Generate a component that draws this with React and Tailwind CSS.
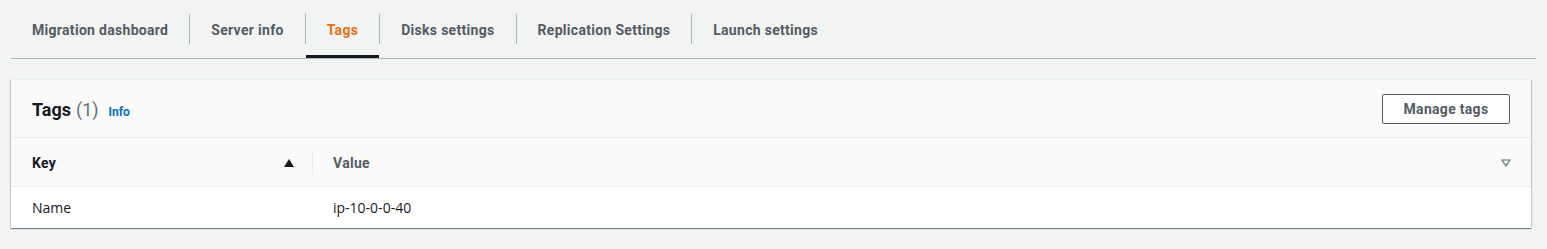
import React from "react";

const tabs = [
    {label: "Migration dashboard"},
    {label: "Server info"},
    {label: "Tags", active: true},
    {label: "Disks settings"},
    {label: "Replication Settings"},
    {label: "Launch settings"},
];

function TabBar() {
    return (
        <div className="flex items-stretch border-b border-[#aab7b8] h-[59px]">
            {tabs.map((t, i) => (
                <div key={t.label} className="flex items-center">
                    {i > 0 && <div className="w-px h-[30px] bg-[#aab7b8]"/>}
                    <div className={"relative h-full flex items-center pt-[2px] px-[21px] text-[14px] font-bold tracking-[0.3px] " + (t.active ? "text-[#ec7211]" : "text-[#545b64]")}>
                        {t.label}
                        {t.active && <div className="absolute left-0 right-0 bottom-0 h-[3px] bg-[#16191f]"/>}
                    </div>
                </div>
            ))}
        </div>
    );
}

export default function App() {
    return (
        <div className="w-[1547px] h-[249px] bg-[#f2f3f3] px-[11px] text-[#16191f]" style={{fontFamily: 'Roboto, "Open Sans", sans-serif'}}>
            <TabBar/>
            <div className="mt-[20px] w-[1520px] bg-white border-t border-[#eaeded] shadow-[0_1px_1px_0_rgba(0,28,36,0.3),1px_1px_1px_0_rgba(0,28,36,0.15),-1px_1px_1px_0_rgba(0,28,36,0.15)]">
                <div className="h-[58px] bg-[#fafafa] border-b border-[#eaeded] flex items-center justify-between pl-[21px] pr-[21px]">
                    <div className="flex items-baseline pt-[2px]">
                        <span className="text-[18px] font-bold">Tags</span>
                        <span className="text-[18px] text-[#687078] ml-[5px]">(1)</span>
                        <span className="text-[12px] font-bold text-[#0073bb] ml-[10px]">Info</span>
                    </div>
                    <button className="h-[30px] w-[128px] pt-[1px] bg-white border border-[#545b64] rounded-[2px] text-[14px] font-bold tracking-[0.3px] text-[#545b64]">Manage tags</button>
                </div>
                <div className="h-[49px] pt-[2px] bg-[#fafafa] border-b border-[#eaeded] flex items-center text-[14px] font-bold tracking-[0.3px]">
                    <div className="w-[301px] flex items-center justify-between pl-[21px] pr-[18px]">
                        <span>Key</span>
                        <svg width="10" height="8" viewBox="0 0 10 8"><path d="M5 0 L10 8 L0 8 Z" fill="#16191f"/></svg>
                    </div>
                    <div className="w-px h-[24px] bg-[#eaeded]"/>
                    <div className="flex-1 flex items-center justify-between pl-[20px] pr-[20px] text-[#545b64]">
                        <span>Value</span>
                        <svg width="10" height="8" viewBox="0 0 10 8"><path d="M1 1 L9 1 L5 7 Z" fill="none" stroke="#879596" strokeWidth="1.6" strokeLinejoin="round"/></svg>
                    </div>
                </div>
                <div className="h-[41px] flex items-center text-[14px]" style={{fontFamily: '"Open Sans", sans-serif'}}>
                    <div className="w-[302px] pl-[21px]">Name</div>
                    <div className="pl-[20px]">ip-10-0-0-40</div>
                </div>
            </div>
        </div>
    );
}
